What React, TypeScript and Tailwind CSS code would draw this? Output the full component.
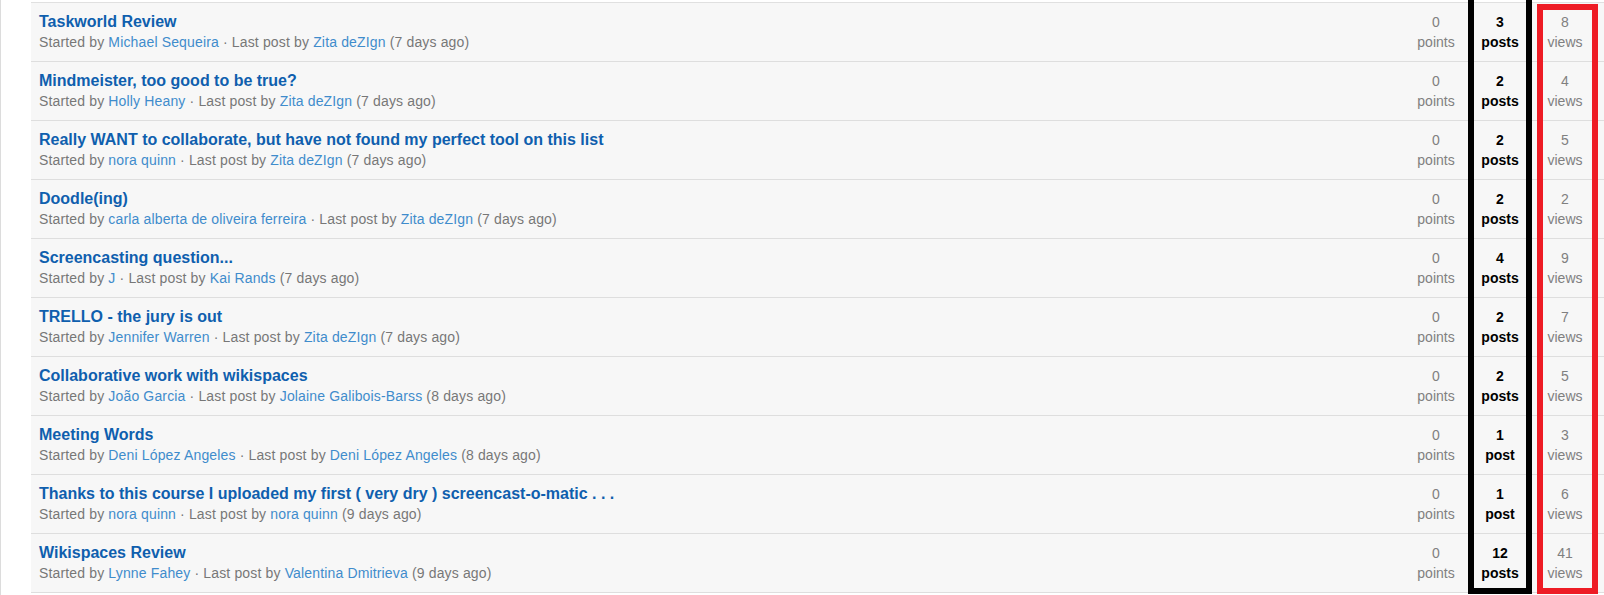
const topics = [
  { title: "Taskworld Review", by: "Michael Sequeira", last: "Zita deZIgn", ago: "7 days ago", points: 0, posts: 3, views: 8 },
  { title: "Mindmeister, too good to be true?", by: "Holly Heany", last: "Zita deZIgn", ago: "7 days ago", points: 0, posts: 2, views: 4 },
  { title: "Really WANT to collaborate, but have not found my perfect tool on this list", by: "nora quinn", last: "Zita deZIgn", ago: "7 days ago", points: 0, posts: 2, views: 5 },
  { title: "Doodle(ing)", by: "carla alberta de oliveira ferreira", last: "Zita deZIgn", ago: "7 days ago", points: 0, posts: 2, views: 2 },
  { title: "Screencasting question...", by: "J", last: "Kai Rands", ago: "7 days ago", points: 0, posts: 4, views: 9 },
  { title: "TRELLO - the jury is out", by: "Jennifer Warren", last: "Zita deZIgn", ago: "7 days ago", points: 0, posts: 2, views: 7 },
  { title: "Collaborative work with wikispaces", by: "João Garcia", last: "Jolaine Galibois-Barss", ago: "8 days ago", points: 0, posts: 2, views: 5 },
  { title: "Meeting Words", by: "Deni López Angeles", last: "Deni López Angeles", ago: "8 days ago", points: 0, posts: 1, views: 3 },
  { title: "Thanks to this course I uploaded my first ( very dry ) screencast-o-matic . . .", by: "nora quinn", last: "nora quinn", ago: "9 days ago", points: 0, posts: 1, views: 6 },
  { title: "Wikispaces Review", by: "Lynne Fahey", last: "Valentina Dmitrieva", ago: "9 days ago", points: 0, posts: 12, views: 41 },
];

export default function App() {
  return (
    <div className="relative flex h-[595px] w-[1604px] overflow-hidden bg-white font-['Liberation_Sans',Arial,sans-serif]">
      <div className="w-[31px] shrink-0 border-l border-[#dcdcdc]" />

      <div className="flex-1 pt-[2px]">
        <div className="border-t border-[#e0e0e0]">
          {topics.map((t) => (
            <div key={t.title} className="flex h-[59px] items-center border-b border-[#dedede] bg-[#f7f7f7] pr-[6px]">
              <div className="flex-1 pl-[8px]">
                <a className="block text-[16px] font-bold leading-[20px] text-[#0f5fae]">{t.title}</a>
                <div className="text-[14px] leading-[20px] tracking-[0.15px] text-[#777]">
                  Started by <span className="text-[#3f8ccc]">{t.by}</span> · Last post by{" "}
                  <span className="text-[#3f8ccc]">{t.last}</span> ({t.ago})
                </div>
              </div>
              <div className="w-[64px] text-center text-[14px] leading-[20px] text-[#808080]">
                <div>{t.points}</div>
                <div>points</div>
              </div>
              <div className="w-[64px] text-center text-[14px] font-bold leading-[20px] text-black">
                <div>{t.posts}</div>
                <div>{t.posts === 1 ? "post" : "posts"}</div>
              </div>
              <div className="w-[66px] text-center text-[14px] leading-[20px] text-[#808080]">
                <div>{t.views}</div>
                <div>views</div>
              </div>
            </div>
          ))}
        </div>
      </div>

      {/* annotation boxes */}
      <div className="absolute left-[1468px] top-0 h-[594px] w-[64px] border-[6px] border-t-0 border-black" />
      <div className="absolute left-[1537px] top-[4px] h-[590px] w-[61px] border-[6px] border-[#ee1c25]" />
    </div>
  );
}
